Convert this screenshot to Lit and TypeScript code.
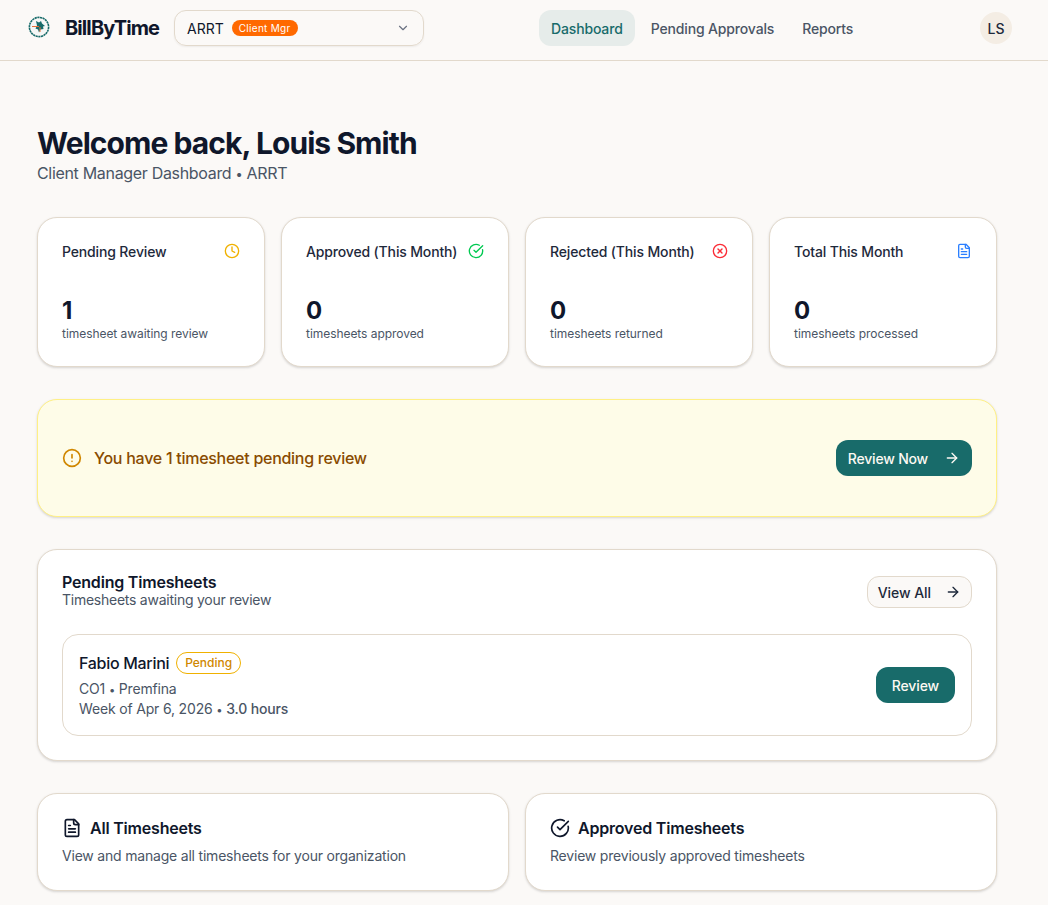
import { LitElement, html, css, svg } from 'lit';
import { customElement } from 'lit/decorators.js';

const icon = (cls: string, body: unknown) => html`
  <svg class=${cls} viewBox="0 0 24 24" fill="none" stroke="currentColor" stroke-width="2" stroke-linecap="round" stroke-linejoin="round">${body}</svg>
`;

const clock = svg`<circle cx="12" cy="12" r="10"/><path d="M12 6v6l4 2"/>`;
const circleCheck = svg`<path d="M21.8 10A10 10 0 1 1 17 3.34"/><path d="m9 11 3 3L22 4"/>`;
const circleX = svg`<circle cx="12" cy="12" r="10"/><path d="m15 9-6 6"/><path d="m9 9 6 6"/>`;
const fileText = svg`<path d="M15 2H6a2 2 0 0 0-2 2v16a2 2 0 0 0 2 2h12a2 2 0 0 0 2-2V7Z"/><path d="M14 2v4a2 2 0 0 0 2 2h4"/><path d="M10 9H8"/><path d="M16 13H8"/><path d="M16 17H8"/>`;
const circleAlert = svg`<circle cx="12" cy="12" r="10"/><path d="M12 8v4"/><path d="M12 16h.01"/>`;
const arrowRight = svg`<path d="M5 12h14"/><path d="m12 5 7 7-7 7"/>`;
const chevronDown = svg`<path d="m6 9 6 6 6-6"/>`;

const stats = [
  { title: 'Pending Review', value: '1', note: 'timesheet awaiting review', icon: clock, color: 'amber' },
  { title: 'Approved (This Month)', value: '0', note: 'timesheets approved', icon: circleCheck, color: 'green' },
  { title: 'Rejected (This Month)', value: '0', note: 'timesheets returned', icon: circleX, color: 'red' },
  { title: 'Total This Month', value: '0', note: 'timesheets processed', icon: fileText, color: 'blue' },
];

@customElement('app-root')
export class AppRoot extends LitElement {
  static styles = css`
    :host {
      display: block;
      height: 905px;
      overflow: hidden;
      background: #fbf9f7;
      color: #0f172b;
      font-family: Inter, 'Liberation Sans', sans-serif;
    }
    * {
      box-sizing: border-box;
    }
    header {
      display: flex;
      align-items: center;
      height: 61px;
      padding: 0 36px 4px 28px;
      border-bottom: 1px solid #e2d9cc;
    }
    .logo {
      width: 22px;
      height: 22px;
      margin: 0 15px 2px 0;
    }
    .brand {
      font-size: 20px;
      font-weight: 700;
      letter-spacing: -0.9px;
      width: 109px;
    }
    .select {
      display: flex;
      align-items: center;
      width: 250px;
      height: 36px;
      padding: 0 13px 0 12px;
      border: 1px solid #e2d9cc;
      border-radius: 12px;
      box-shadow: 0 1px 2px rgba(0, 0, 0, 0.06);
      font-size: 14px;
    }
    .org {
      margin-right: 8px;
    }
    .role {
      background: #ff6900;
      color: #fff;
      font-size: 10px;
      font-weight: 400;
      letter-spacing: 0.3px;
      line-height: 16px;
      padding: 0 7px;
      border-radius: 8px;
    }
    .chev {
      width: 14px;
      height: 14px;
      margin-left: auto;
      color: #6a7282;
    }
    nav {
      display: flex;
      margin-left: 115px;
      font-size: 14px;
    }
    nav a {
      display: flex;
      align-items: center;
      height: 36px;
      padding: 0 12px;
      margin-right: 4px;
      border-radius: 12px;
      color: #4a5565;
      font-weight: 450;
      letter-spacing: -0.15px;
    }
    nav a.on {
      background: #e6ecea;
      color: #186b6a;
    }
    .avatar {
      display: flex;
      align-items: center;
      justify-content: center;
      width: 32px;
      height: 32px;
      margin-left: auto;
      border-radius: 50%;
      background: #f4ede4;
      color: #1e293b;
      font-size: 14px;
      font-weight: 500;
    }
    main {
      width: 960px;
      margin-left: 37px;
      padding-top: 64px;
    }
    h1 {
      margin: 0;
      font-size: 30px;
      line-height: 36px;
      font-weight: 700;
      letter-spacing: -0.93px;
    }
    .sub {
      font-size: 16px;
      line-height: 24px;
      letter-spacing: -0.32px;
      color: #4a5565;
    }
    .dot {
      font-size: 0.8em;
      line-height: 0;
    }
    .card {
      background: #fff;
      border: 1px solid #e2d9cc;
      border-radius: 20px;
      box-shadow: 0 1px 3px rgba(0, 0, 0, 0.1), 0 1px 2px rgba(0, 0, 0, 0.06);
    }
    .stats {
      display: grid;
      grid-template-columns: repeat(4, 1fr);
      gap: 16px;
      margin-top: 32px;
    }
    .stat {
      height: 150px;
      padding: 23px 24px 24px;
    }
    .stat-head {
      display: flex;
      align-items: center;
      justify-content: space-between;
      height: 20px;
      font-size: 14px;
      font-weight: 450;
      letter-spacing: -0.15px;
      color: #1e293b;
    }
    .i16 {
      width: 16px;
      height: 16px;
      flex: none;
    }
    .amber {
      color: #f0b100;
    }
    .green {
      color: #00c951;
    }
    .red {
      color: #fb2c36;
    }
    .blue {
      color: #2b7fff;
    }
    .value {
      margin-top: 35px;
      font-size: 24px;
      line-height: 30px;
      font-weight: 700;
    }
    .note {
      font-size: 12px;
      line-height: 15px;
      letter-spacing: -0.05px;
      color: #4a5565;
    }
    .banner {
      display: flex;
      align-items: center;
      height: 118px;
      margin-top: 32px;
      padding: 0 24px;
      background: #fefce8;
      border: 1px solid #fff085;
      border-radius: 20px;
      box-shadow: 0 1px 3px rgba(0, 0, 0, 0.1), 0 1px 2px rgba(0, 0, 0, 0.06);
    }
    .banner .i20 {
      margin-right: 12px;
      color: #d08700;
    }
    .banner span {
      font-size: 16px;
      font-weight: 450;
      letter-spacing: -0.27px;
      color: #894b00;
    }
    .btn {
      display: flex;
      align-items: center;
      height: 36px;
      padding: 0 16px;
      background: #186b6a;
      color: #fdf9f3;
      border-radius: 12px;
      font-size: 14px;
      font-weight: 450;
      letter-spacing: -0.12px;
    }
    .banner .btn {
      margin-left: auto;
      padding: 0 12px;
      gap: 16px;
      letter-spacing: -0.2px;
    }
    .pending {
      height: 212px;
      margin-top: 32px;
      padding: 22px 24px 24px;
    }
    .pending-head {
      display: flex;
      align-items: flex-start;
      justify-content: space-between;
    }
    h2 {
      margin: 0;
      font-size: 16px;
      line-height: 20px;
      font-weight: 600;
      letter-spacing: -0.2px;
    }
    .desc {
      font-size: 14px;
      line-height: 16px;
      letter-spacing: -0.25px;
      color: #4a5565;
    }
    .outline {
      display: flex;
      align-items: center;
      gap: 14px;
      height: 32px;
      margin-top: 4px;
      padding: 0 10px;
      background: #fbf9f7;
      border: 1px solid #e2d9cc;
      border-radius: 12px;
      font-size: 14px;
      font-weight: 450;
      letter-spacing: -0.05px;
      color: #1e293b;
    }
    .row {
      display: flex;
      align-items: center;
      justify-content: space-between;
      height: 102px;
      margin-top: 26px;
      padding: 0 16px;
      border: 1px solid #e2d9cc;
      border-radius: 16px;
    }
    .who {
      display: flex;
      align-items: center;
      gap: 7px;
      font-size: 16px;
      font-weight: 450;
      letter-spacing: -0.3px;
      line-height: 24px;
      margin-bottom: 4px;
    }
    .badge {
      padding: 0 8px;
      height: 22px;
      line-height: 20px;
      border: 1px solid #f0b100;
      border-radius: 11px;
      color: #d08700;
      font-size: 12px;
      font-weight: 450;
      letter-spacing: 0;
    }
    .meta {
      font-size: 14px;
      line-height: 20px;
      letter-spacing: -0.17px;
      color: #4a5565;
    }
    .meta b {
      font-weight: 500;
    }
    .links {
      display: grid;
      grid-template-columns: repeat(2, 1fr);
      gap: 16px;
      width: 960px;
      margin-top: 32px;
    }
    .link {
      height: 98px;
      padding: 24px;
    }
    .link-head {
      display: flex;
      align-items: center;
      gap: 8px;
      font-size: 16px;
      line-height: 20px;
      font-weight: 600;
      letter-spacing: -0.2px;
    }
    .i20 {
      width: 20px;
      height: 20px;
    }
    .link p {
      margin: 8px 0 0;
      font-size: 14px;
      line-height: 20px;
      letter-spacing: -0.2px;
      color: #4a5565;
    }
  `;

  render() {
    return html`
      <header>
        <svg class="logo" viewBox="0 0 22 22" fill="none">
          <circle cx="11" cy="11" r="9.6" stroke="#186b6a" stroke-width="1.6" stroke-dasharray="2.2 0.5"/>
          <circle cx="11" cy="11" r="7.6" fill="#f4f7f6"/>
          <path d="M8 5l3 1.500 2-1.500 1 2.500 3 2.500-2 .5.5 2.500-3 .5-1.500 3-1-3-2.500-1 1.500-3z" fill="#186b6a"/>
          <path d="M4 10.500h7M12 11v5" stroke="#e8703a" stroke-width="1"/>
        </svg>
        <div class="brand">BillByTime</div>
        <div class="select">
          <span class="org">ARRT</span>
          <span class="role">Client Mgr</span>
          ${icon('chev', chevronDown)}
        </div>
        <nav>
          <a class="on">Dashboard</a>
          <a>Pending Approvals</a>
          <a>Reports</a>
        </nav>
        <div class="avatar">LS</div>
      </header>
      <main>
        <h1>Welcome back, Louis Smith</h1>
        <div class="sub">Client Manager Dashboard <span class="dot">•</span> ARRT</div>
        <div class="stats">
          ${stats.map(
            (s) => html`
              <div class="card stat">
                <div class="stat-head">
                  <span>${s.title}</span>
                  ${icon(`i16 ${s.color}`, s.icon)}
                </div>
                <div class="value">${s.value}</div>
                <div class="note">${s.note}</div>
              </div>
            `
          )}
        </div>
        <div class="banner">
          ${icon('i20', circleAlert)}
          <span>You have 1 timesheet pending review</span>
          <div class="btn">Review Now ${icon('i16', arrowRight)}</div>
        </div>
        <div class="card pending">
          <div class="pending-head">
            <div>
              <h2>Pending Timesheets</h2>
              <div class="desc">Timesheets awaiting your review</div>
            </div>
            <div class="outline">View All ${icon('i16', arrowRight)}</div>
          </div>
          <div class="row">
            <div>
              <div class="who">Fabio Marini <span class="badge">Pending</span></div>
              <div class="meta">CO1 <span class="dot">•</span> Premfina</div>
              <div class="meta">Week of Apr 6, 2026 <span class="dot">•</span> <b>3.0 hours</b></div>
            </div>
            <div class="btn">Review</div>
          </div>
        </div>
        <div class="links">
          <div class="card link">
            <div class="link-head">${icon('i20', fileText)} All Timesheets</div>
            <p>View and manage all timesheets for your organization</p>
          </div>
          <div class="card link">
            <div class="link-head">${icon('i20', circleCheck)} Approved Timesheets</div>
            <p>Review previously approved timesheets</p>
          </div>
        </div>
      </main>
    `;
  }
}
